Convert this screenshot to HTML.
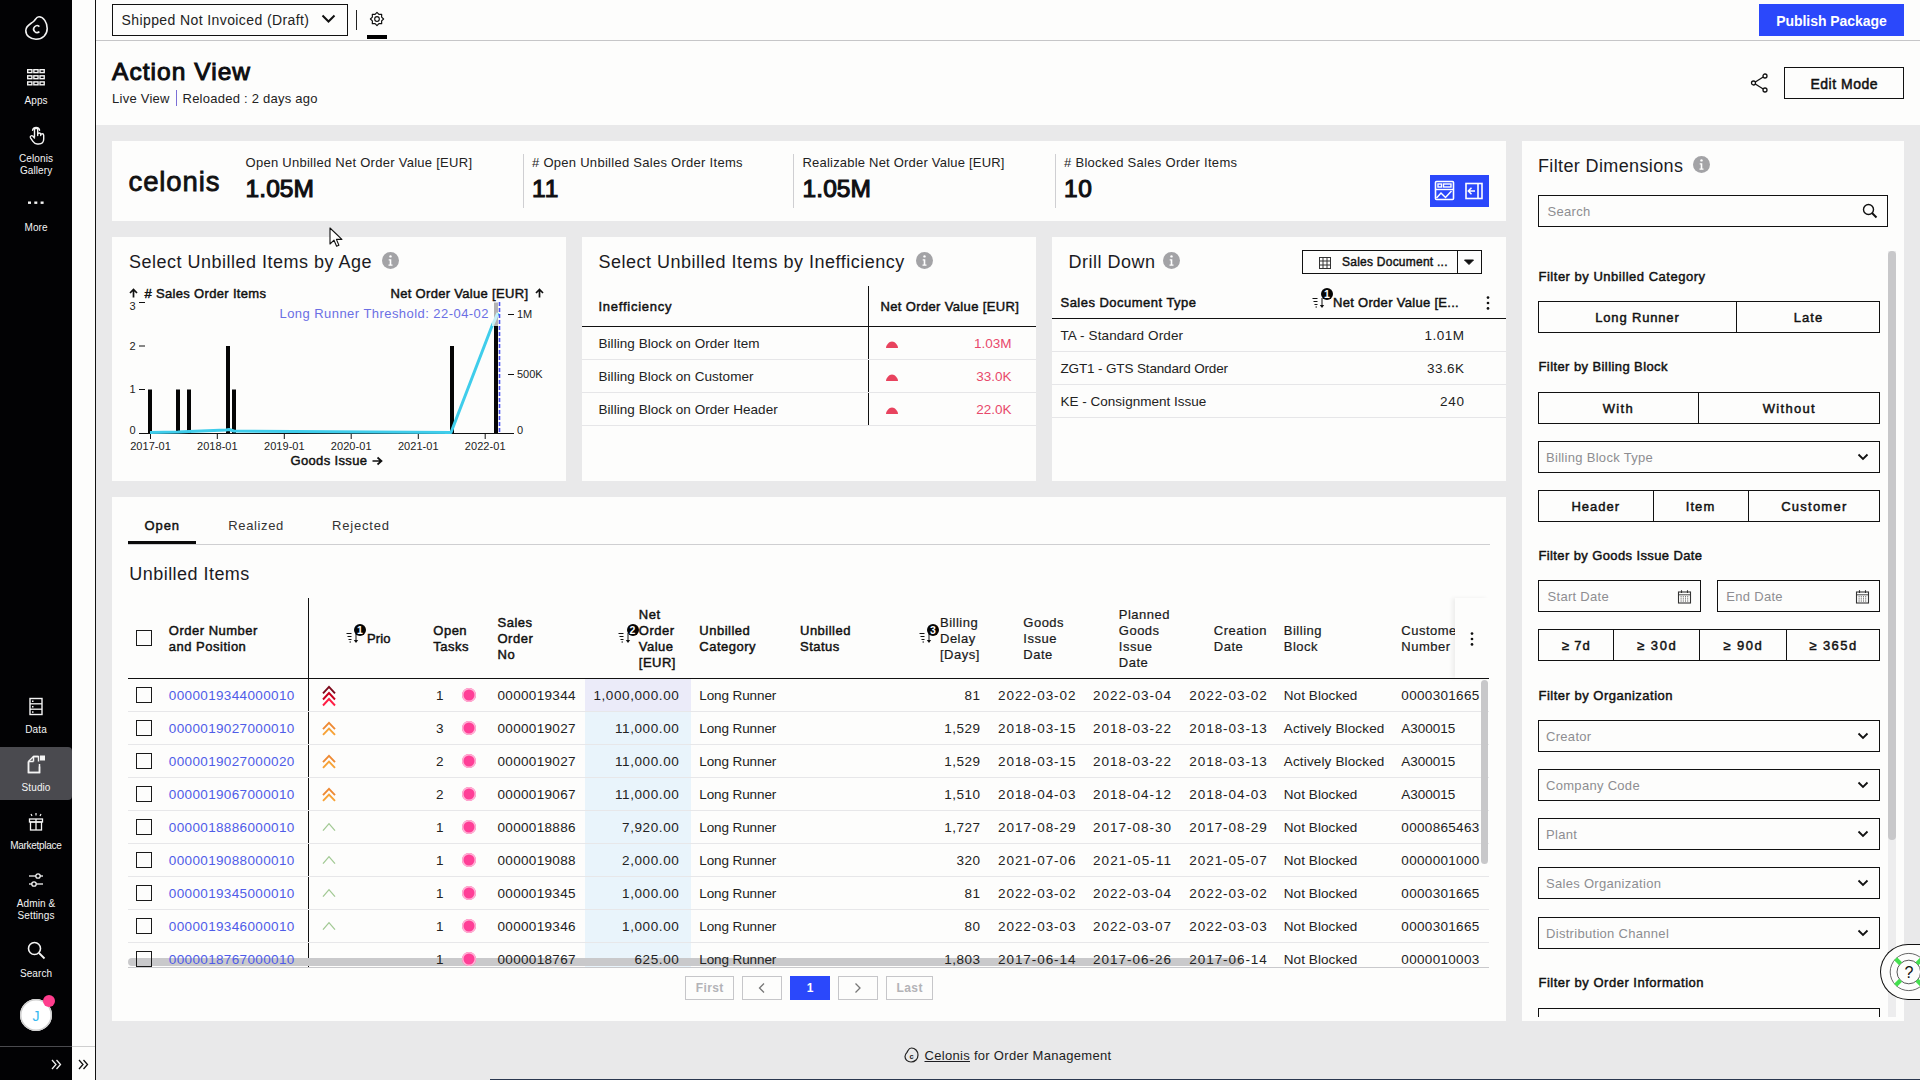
<!DOCTYPE html>
<html><head><meta charset="utf-8"><title>Action View</title>
<style>
html,body{margin:0;padding:0;width:1920px;height:1080px;overflow:hidden;background:#fdfdfc}
body{position:relative;font-family:"Liberation Sans",sans-serif}
.r{position:absolute}
.t{position:absolute;white-space:pre;font-family:"Liberation Sans",sans-serif}
</style></head><body>
<div class="r" style="left:96px;top:0px;width:1824px;height:1080px;background:#fdfdfc"></div>
<div class="r" style="left:96px;top:125px;width:1824px;height:955px;background:#e9e9ea"></div>
<div class="r" style="left:96px;top:40px;width:1824px;height:1px;background:#c6c6c8"></div>
<div class="r" style="left:0px;top:0px;width:72px;height:1080px;background:#020204"></div>
<div class="r" style="left:72px;top:0px;width:23px;height:1080px;background:#fdfdfc"></div>
<div class="r" style="left:95px;top:0px;width:1px;height:1080px;background:#111"></div>
<div class="r" style="left:0px;top:1046px;width:72px;height:1px;background:#4a4a4e"></div>
<div class="r" style="left:72px;top:1046px;width:23px;height:1px;background:#cfcfcf"></div>
<div class="r" style="left:490px;top:1079px;width:1430px;height:1px;background:#2a3850"></div>
<div class="r" style="left:112px;top:141px;width:1394px;height:80px;background:#fdfdfc"></div>
<div class="r" style="left:1522px;top:141px;width:382px;height:880px;background:#fdfdfc"></div>
<div class="r" style="left:112px;top:237px;width:454px;height:244px;background:#fdfdfc"></div>
<div class="r" style="left:582px;top:237px;width:454px;height:244px;background:#fdfdfc"></div>
<div class="r" style="left:1052px;top:237px;width:454px;height:244px;background:#fdfdfc"></div>
<div class="r" style="left:112px;top:497px;width:1394px;height:524px;background:#fdfdfc"></div>
<svg class="r" style="left:20px;top:12px;" width="32" height="32" viewBox="0 0 32 32"><path d="M19 4.8C23.5 4.8 27.2 10.5 27.2 16.5 27.2 22.8 22.5 27.2 16 27.2 10 27.2 5.8 23.5 5.8 18.5 5.8 13.5 10.5 12 13.5 9.5 15.5 7.8 16.2 4.8 19 4.8Z" fill="none" stroke="#f2f2f2" stroke-width="1.6"/><path d="M19.4 14.6A3.4 3.4 0 1 0 19.4 19.6" fill="none" stroke="#f2f2f2" stroke-width="1.6"/></svg>
<svg class="r" style="left:27px;top:68.8px;" width="20" height="18" viewBox="0 0 20 18"><rect x="0.70" y="0.70" width="4.2" height="2.9" fill="none" stroke="#f4f4f4" stroke-width="1.4"/><rect x="6.85" y="0.70" width="4.2" height="2.9" fill="none" stroke="#f4f4f4" stroke-width="1.4"/><rect x="13.00" y="0.70" width="4.2" height="2.9" fill="none" stroke="#f4f4f4" stroke-width="1.4"/><rect x="0.70" y="6.80" width="4.2" height="2.9" fill="none" stroke="#f4f4f4" stroke-width="1.4"/><rect x="6.85" y="6.80" width="4.2" height="2.9" fill="none" stroke="#f4f4f4" stroke-width="1.4"/><rect x="13.00" y="6.80" width="4.2" height="2.9" fill="none" stroke="#f4f4f4" stroke-width="1.4"/><rect x="0.70" y="12.90" width="4.2" height="2.9" fill="none" stroke="#f4f4f4" stroke-width="1.4"/><rect x="6.85" y="12.90" width="4.2" height="2.9" fill="none" stroke="#f4f4f4" stroke-width="1.4"/><rect x="13.00" y="12.90" width="4.2" height="2.9" fill="none" stroke="#f4f4f4" stroke-width="1.4"/></svg>
<div class="t" style="top:96.00px;font-size:10px;line-height:10px;font-weight:400;color:#f4f4f4;letter-spacing:0.100px;left:-263.95px;width:600px;text-align:center;">Apps</div>
<svg class="r" style="left:27px;top:125px;" width="20" height="20" viewBox="0 0 20 20"><path d="M7.5 12V5a1.6 1.6 0 0 1 3.2 0v5.5 M10.7 9.5a1.5 1.5 0 0 1 3 0v1 M13.7 10.2a1.5 1.5 0 0 1 3 0v3.8c0 3-2 5-5 5h-1.5c-2 0-3.2-1-4.3-2.6L3.5 12.8a1.4 1.4 0 0 1 2.2-1.7L7.5 13 M5.6 5.2a3.6 3.6 0 0 1 7 0" fill="none" stroke="#f4f4f4" stroke-width="1.4" stroke-linecap="round" stroke-linejoin="round"/></svg>
<div class="t" style="top:154.00px;font-size:10px;line-height:10px;font-weight:400;color:#f4f4f4;letter-spacing:0.100px;left:-263.95px;width:600px;text-align:center;">Celonis</div>
<div class="t" style="top:166.00px;font-size:10px;line-height:10px;font-weight:400;color:#f4f4f4;letter-spacing:0.100px;left:-263.95px;width:600px;text-align:center;">Gallery</div>
<svg class="r" style="left:26px;top:200px;" width="20" height="6" viewBox="0 0 20 6"><rect x="2.0" y="1.5" width="3" height="2.4" fill="#f4f4f4"/><rect x="8.3" y="1.5" width="3" height="2.4" fill="#f4f4f4"/><rect x="14.6" y="1.5" width="3" height="2.4" fill="#f4f4f4"/></svg>
<div class="t" style="top:222.50px;font-size:10px;line-height:10px;font-weight:400;color:#f4f4f4;letter-spacing:0.100px;left:-263.95px;width:600px;text-align:center;">More</div>
<svg class="r" style="left:27px;top:696px;" width="18" height="21" viewBox="0 0 18 21"><rect x="3" y="2.5" width="12" height="16" fill="none" stroke="#f4f4f4" stroke-width="1.4"/><line x1="3" y1="7.8" x2="15" y2="7.8" stroke="#f4f4f4" stroke-width="1.3"/><line x1="3" y1="13.2" x2="15" y2="13.2" stroke="#f4f4f4" stroke-width="1.3"/><rect x="5" y="4.5" width="1.5" height="1.5" fill="#f4f4f4"/><rect x="5" y="10" width="1.5" height="1.5" fill="#f4f4f4"/><rect x="5" y="15.3" width="1.5" height="1.5" fill="#f4f4f4"/></svg>
<div class="t" style="top:725.00px;font-size:10px;line-height:10px;font-weight:400;color:#f4f4f4;letter-spacing:0.100px;left:-263.95px;width:600px;text-align:center;">Data</div>
<div class="r" style="left:0px;top:747px;width:72px;height:53px;background:#4a4a4f;border-radius:0 4px 4px 0"></div>
<svg class="r" style="left:25px;top:753px;" width="22" height="22" viewBox="0 0 22 22"><path d="M3.5 8.5h5l0 0v-0 M3.5 8.5v11h11v-6 M3.5 8.5l5-0 M8.5 8.5v-5 M8.5 3.5l4.5 0 M14.5 13.5l0 0" fill="none" stroke="#f4f4f4" stroke-width="1.5"/><path d="M3.5 8.5L8.5 3.5h5v5" fill="none" stroke="#f4f4f4" stroke-width="1.4"/><rect x="15" y="2.5" width="5" height="5" fill="#f4f4f4"/><path d="M14.5 11v8.5h-11v-11" fill="none" stroke="#f4f4f4" stroke-width="1.5"/></svg>
<div class="t" style="top:782.50px;font-size:10px;line-height:10px;font-weight:400;color:#f4f4f4;letter-spacing:0.100px;left:-263.95px;width:600px;text-align:center;">Studio</div>
<svg class="r" style="left:26px;top:811px;" width="20" height="21" viewBox="0 0 20 21"><rect x="3.5" y="8" width="13" height="3" fill="none" stroke="#f4f4f4" stroke-width="1.3"/><rect x="4.5" y="11" width="11" height="8" fill="none" stroke="#f4f4f4" stroke-width="1.3"/><line x1="10" y1="8" x2="10" y2="19" stroke="#f4f4f4" stroke-width="1.3"/><path d="M5 3l1 2M10 2v2.5M15 3l-1 2" stroke="#f4f4f4" stroke-width="1.2"/></svg>
<div class="t" style="top:840.50px;font-size:10px;line-height:10px;font-weight:400;color:#f4f4f4;letter-spacing:-0.297px;left:-264.15px;width:600px;text-align:center;">Marketplace</div>
<svg class="r" style="left:26px;top:870px;" width="20" height="20" viewBox="0 0 20 20"><line x1="3" y1="6" x2="17" y2="6" stroke="#f4f4f4" stroke-width="1.3"/><circle cx="12" cy="6" r="2.2" fill="#020204" stroke="#f4f4f4" stroke-width="1.3"/><line x1="3" y1="14" x2="17" y2="14" stroke="#f4f4f4" stroke-width="1.3"/><circle cx="8" cy="14" r="2.2" fill="#020204" stroke="#f4f4f4" stroke-width="1.3"/></svg>
<div class="t" style="top:898.50px;font-size:10px;line-height:10px;font-weight:400;color:#f4f4f4;letter-spacing:0.100px;left:-263.95px;width:600px;text-align:center;">Admin &amp;</div>
<div class="t" style="top:910.50px;font-size:10px;line-height:10px;font-weight:400;color:#f4f4f4;letter-spacing:0.100px;left:-263.95px;width:600px;text-align:center;">Settings</div>
<svg class="r" style="left:26px;top:940px;" width="20" height="20" viewBox="0 0 20 20"><circle cx="8.5" cy="8.5" r="6" fill="none" stroke="#f4f4f4" stroke-width="1.6"/><line x1="13" y1="13" x2="18.5" y2="18.5" stroke="#f4f4f4" stroke-width="1.8"/></svg>
<div class="t" style="top:968.50px;font-size:10px;line-height:10px;font-weight:400;color:#f4f4f4;letter-spacing:0.100px;left:-263.95px;width:600px;text-align:center;">Search</div>
<div class="r" style="left:20px;top:999px;width:32px;height:32px;border-radius:50%;background:#fff;box-shadow:0 0 0 1.5px #cfcfcf inset"></div>
<div class="t" style="top:1009.10px;font-size:14px;line-height:14px;font-weight:400;color:#35b8f0;letter-spacing:0.000px;left:-264.00px;width:600px;text-align:center;">J</div>
<div class="r" style="left:43px;top:995px;width:12px;height:12px;border-radius:50%;background:#ff3d8d"></div>
<svg class="r" style="left:51px;top:1059px;" width="11" height="11" viewBox="0 0 11 11"><path d="M1 1l4 4.5-4 4.5M5.5 1l4 4.5-4 4.5" fill="none" stroke="#f0f0f0" stroke-width="1.3"/></svg>
<svg class="r" style="left:78px;top:1059px;" width="11" height="11" viewBox="0 0 11 11"><path d="M1 1l4 4.5-4 4.5M5.5 1l4 4.5-4 4.5" fill="none" stroke="#111" stroke-width="1.3"/></svg>
<div class="r" style="left:112px;top:4px;width:236px;height:32px;border:1px solid #111;box-sizing:border-box"></div>
<div class="t" style="top:13.10px;font-size:14px;line-height:14px;font-weight:400;color:#222;letter-spacing:0.402px;left:121.5px;">Shipped Not Invoiced (Draft)</div>
<svg class="r" style="left:320px;top:12px;" width="17" height="12" viewBox="0 0 17 12"><path d="M2.5 3.5l6 6 6-6" fill="none" stroke="#111" stroke-width="2"/></svg>
<div class="r" style="left:356px;top:10px;width:1px;height:20px;background:#222"></div>
<svg class="r" style="left:367px;top:9px;" width="20" height="20" viewBox="0 0 20 20"><g transform="translate(10 10)"><polygon points="6.60,0.00 4.62,1.91 4.67,4.67 1.91,4.62 0.00,6.60 -1.91,4.62 -4.67,4.67 -4.62,1.91 -6.60,0.00 -4.62,-1.91 -4.67,-4.67 -1.91,-4.62 -0.00,-6.60 1.91,-4.62 4.67,-4.67 4.62,-1.91" fill="none" stroke="#111" stroke-width="1.2" stroke-linejoin="round"/><circle r="2.3" fill="none" stroke="#111" stroke-width="1.2"/></g></svg>
<div class="r" style="left:367px;top:35px;width:20px;height:4px;background:#000"></div>
<div class="r" style="left:1759px;top:4px;width:145px;height:32px;background:#2b48fb"></div>
<div class="t" style="top:13.60px;font-size:14px;line-height:14px;font-weight:700;color:#fff;letter-spacing:-0.050px;left:1531.47px;width:600px;text-align:center;">Publish Package</div>
<div class="t" style="top:60.17px;font-size:24.5px;line-height:24.5px;font-weight:400;color:#0d0d10;letter-spacing:1.044px;left:112px;-webkit-text-stroke:1px #0d0d10">Action View</div>
<div class="t" style="top:91.95px;font-size:13px;line-height:13px;font-weight:400;color:#222;letter-spacing:0.262px;left:112px;">Live View</div>
<div class="r" style="left:176px;top:90px;width:1px;height:16px;background:#7b6fd6"></div>
<div class="t" style="top:91.95px;font-size:13px;line-height:13px;font-weight:400;color:#222;letter-spacing:0.245px;left:182.5px;">Reloaded : 2 days ago</div>
<svg class="r" style="left:1749px;top:72px;" width="22" height="22" viewBox="0 0 22 22"><circle cx="16" cy="4" r="2" fill="none" stroke="#111" stroke-width="1.3"/><circle cx="4.5" cy="11" r="2" fill="none" stroke="#111" stroke-width="1.3"/><circle cx="16" cy="18" r="2" fill="none" stroke="#111" stroke-width="1.3"/><line x1="6.3" y1="10" x2="14.2" y2="5" stroke="#111" stroke-width="1.3"/><line x1="6.3" y1="12" x2="14.2" y2="17" stroke="#111" stroke-width="1.3"/></svg>
<div class="r" style="left:1784px;top:67px;width:120px;height:32px;border:1px solid #111;box-sizing:border-box"></div>
<div class="t" style="top:76.60px;font-size:14px;line-height:14px;font-weight:400;color:#111;letter-spacing:0.495px;left:1544.25px;width:600px;text-align:center;-webkit-text-stroke:0.49px #111;">Edit Mode</div>
<svg class="r" style="left:902px;top:1046px;" width="18" height="18" viewBox="0 0 18 18"><path d="M9.5 2c3.5 0 6.5 3 6.5 7s-3 7-7 7C5.5 16 3 13.5 3 10.5 3 8.5 4 7.5 5 6.3 6.3 4.5 6.5 2 9.5 2z" fill="none" stroke="#222" stroke-width="1.2"/><text x="9.5" y="12.5" text-anchor="middle" font-family="Liberation Sans" font-weight="700" font-size="7.5" fill="#222">c</text></svg>
<div class="t" style="top:1048.95px;font-size:13px;line-height:13px;font-weight:400;color:#1d1d22;letter-spacing:0.300px;left:924.5px;"><span style="text-decoration:underline">Celonis</span> for Order Management</div>
<div class="t" style="top:167.62px;font-size:27.5px;line-height:27.5px;font-weight:400;color:#111;letter-spacing:0.899px;left:128.5px;-webkit-text-stroke:0.8px #111">celonis</div>
<div class="t" style="top:155.95px;font-size:13px;line-height:13px;font-weight:400;color:#222;letter-spacing:0.272px;left:245.5px;">Open Unbilled Net Order Value [EUR]</div>
<div class="t" style="top:177.18px;font-size:24.5px;line-height:24.5px;font-weight:400;color:#0f0f12;letter-spacing:0.101px;left:245.5px;-webkit-text-stroke:1.1px #0f0f12">1.05M</div>
<div class="t" style="top:155.95px;font-size:13px;line-height:13px;font-weight:400;color:#222;letter-spacing:0.278px;left:532px;"># Open Unbilled Sales Order Items</div>
<div class="t" style="top:177.18px;font-size:24.5px;line-height:24.5px;font-weight:400;color:#0f0f12;letter-spacing:1.066px;left:532px;-webkit-text-stroke:1.1px #0f0f12">11</div>
<div class="t" style="top:155.95px;font-size:13px;line-height:13px;font-weight:400;color:#222;letter-spacing:0.207px;left:802.5px;">Realizable Net Order Value [EUR]</div>
<div class="t" style="top:177.18px;font-size:24.5px;line-height:24.5px;font-weight:400;color:#0f0f12;letter-spacing:0.101px;left:802.5px;-webkit-text-stroke:1.1px #0f0f12">1.05M</div>
<div class="t" style="top:155.95px;font-size:13px;line-height:13px;font-weight:400;color:#222;letter-spacing:0.290px;left:1064px;"># Blocked Sales Order Items</div>
<div class="t" style="top:177.18px;font-size:24.5px;line-height:24.5px;font-weight:400;color:#0f0f12;letter-spacing:0.748px;left:1064px;-webkit-text-stroke:1.1px #0f0f12">10</div>
<div class="r" style="left:523px;top:154px;width:1px;height:54px;background:#cfcfd2"></div>
<div class="r" style="left:793px;top:154px;width:1px;height:54px;background:#cfcfd2"></div>
<div class="r" style="left:1055px;top:154px;width:1px;height:54px;background:#cfcfd2"></div>
<div class="r" style="left:1430px;top:175px;width:59px;height:32px;background:#2b48fb"></div>
<svg class="r" style="left:1430px;top:175px;" width="59" height="32" viewBox="0 0 59 32"><rect x="5.5" y="6.5" width="18" height="18" rx="1" fill="none" stroke="#fff" stroke-width="1.6"/><rect x="8" y="9" width="3.5" height="3" fill="none" stroke="#fff" stroke-width="1.4"/><rect x="13.5" y="9" width="7.5" height="3" fill="none" stroke="#fff" stroke-width="1.4"/><line x1="5.5" y1="14.5" x2="23.5" y2="14.5" stroke="#fff" stroke-width="1.4"/><path d="M6.5 23l4.5-5 4.5 4.5 6-6.5" fill="none" stroke="#fff" stroke-width="1.5"/><rect x="36" y="8.5" width="16" height="15" fill="none" stroke="#fff" stroke-width="1.6"/><line x1="48" y1="8.5" x2="48" y2="23.5" stroke="#fff" stroke-width="1.6"/><path d="M45 16h-6.5M41.5 12.8l-3.2 3.2 3.2 3.2" fill="none" stroke="#fff" stroke-width="1.5"/></svg>
<svg class="r" style="left:329px;top:227px;" width="14" height="22" viewBox="0 0 14 22"><path d="M1 1v16l4-3.8 2.6 6 2.3-1-2.5-5.8h5.5z" fill="#fff" stroke="#111" stroke-width="1.1" stroke-linejoin="round"/></svg>
<div class="t" style="top:252.70px;font-size:18px;line-height:18px;font-weight:400;color:#1b1b1f;letter-spacing:0.500px;left:129px;">Select Unbilled Items by Age</div>
<svg class="r" style="left:381.5px;top:252.0px;" width="17" height="17" viewBox="0 0 17 17"><circle cx="8.5" cy="8.5" r="8.5" fill="#a3a3a6"/><circle cx="8.5" cy="4.42" r="1.2" fill="#fff"/><path d="M6.70 7.30h2.6v5.2h1.2v1.3h-4v-1.3h1.2v-3.9h-1z" fill="#fff"/></svg>
<svg class="r" style="left:129px;top:288px;" width="9" height="11" viewBox="0 0 9 11"><path d="M4.5 9.5V1.5M1 5l3.5-3.5L8 5" fill="none" stroke="#111" stroke-width="1.7"/></svg>
<div class="t" style="top:286.95px;font-size:13px;line-height:13px;font-weight:400;color:#111;letter-spacing:0.328px;left:144.5px;-webkit-text-stroke:0.46px #111;"># Sales Order Items</div>
<div class="t" style="top:286.55px;font-size:13px;line-height:13px;font-weight:400;color:#111;letter-spacing:0.312px;left:390.5px;-webkit-text-stroke:0.46px #111;">Net Order Value [EUR]</div>
<svg class="r" style="left:535px;top:288px;" width="9" height="11" viewBox="0 0 9 11"><path d="M4.5 9.5V1.5M1 5l3.5-3.5L8 5" fill="none" stroke="#111" stroke-width="1.7"/></svg>
<svg class="r" style="left:0;top:0" width="600" height="480"><rect x="148" y="389.5" width="4" height="43.5" fill="#050505"/><rect x="176" y="389.5" width="4" height="43.5" fill="#050505"/><rect x="187" y="389.5" width="4" height="43.5" fill="#050505"/><rect x="226" y="346.0" width="4" height="87.0" fill="#050505"/><rect x="232" y="389.5" width="4" height="43.5" fill="#050505"/><rect x="450" y="346.0" width="4" height="87.0" fill="#050505"/><rect x="494" y="302.5" width="4" height="130.5" fill="#050505"/><line x1="139" y1="433.5" x2="514" y2="433.5" stroke="#111" stroke-width="1"/><line x1="139" y1="389.5" x2="145" y2="389.5" stroke="#111" stroke-width="1"/><line x1="139" y1="346.0" x2="145" y2="346.0" stroke="#111" stroke-width="1"/><line x1="139" y1="302.5" x2="145" y2="302.5" stroke="#111" stroke-width="1"/><line x1="150.5" y1="433" x2="150.5" y2="439" stroke="#111" stroke-width="1"/><line x1="217.3" y1="433" x2="217.3" y2="439" stroke="#111" stroke-width="1"/><line x1="284.3" y1="433" x2="284.3" y2="439" stroke="#111" stroke-width="1"/><line x1="351.2" y1="433" x2="351.2" y2="439" stroke="#111" stroke-width="1"/><line x1="418.3" y1="433" x2="418.3" y2="439" stroke="#111" stroke-width="1"/><line x1="485.2" y1="433" x2="485.2" y2="439" stroke="#111" stroke-width="1"/><line x1="508" y1="314.5" x2="514" y2="314.5" stroke="#111" stroke-width="1"/><line x1="508" y1="374.5" x2="514" y2="374.5" stroke="#111" stroke-width="1"/><polyline points="150,432.5 178,432 189,431.5 226,430 229,429.5 234,431 451,432.5 492,326 498,313" fill="none" stroke="#3fcdeb" stroke-width="3" stroke-linejoin="round"/><rect x="492" y="302" width="6" height="24" fill="#fdfdfc" fill-opacity="0.7"/><line x1="499.5" y1="302" x2="499.5" y2="433" stroke="#4a50f0" stroke-width="1.6" stroke-dasharray="4 2"/></svg>
<div class="t" style="top:306.95px;font-size:13px;line-height:13px;font-weight:400;color:#6b6fe4;letter-spacing:0.446px;left:279.5px;">Long Runner Threshold: 22-04-02</div>
<div class="t" style="top:301.15px;font-size:11px;line-height:11px;font-weight:400;color:#222;letter-spacing:0.000px;right:1784.50px;">3</div>
<div class="t" style="top:341.15px;font-size:11px;line-height:11px;font-weight:400;color:#222;letter-spacing:0.000px;right:1784.50px;">2</div>
<div class="t" style="top:384.15px;font-size:11px;line-height:11px;font-weight:400;color:#222;letter-spacing:0.000px;right:1784.50px;">1</div>
<div class="t" style="top:425.15px;font-size:11px;line-height:11px;font-weight:400;color:#222;letter-spacing:0.000px;right:1784.50px;">0</div>
<div class="t" style="top:309.15px;font-size:11px;line-height:11px;font-weight:400;color:#222;letter-spacing:0.000px;left:517px;">1M</div>
<div class="t" style="top:369.15px;font-size:11px;line-height:11px;font-weight:400;color:#222;letter-spacing:0.000px;left:517px;">500K</div>
<div class="t" style="top:425.15px;font-size:11px;line-height:11px;font-weight:400;color:#222;letter-spacing:0.000px;left:517px;">0</div>
<div class="t" style="top:441.45px;font-size:11px;line-height:11px;font-weight:400;color:#222;letter-spacing:0.050px;left:-149.47px;width:600px;text-align:center;">2017-01</div>
<div class="t" style="top:441.45px;font-size:11px;line-height:11px;font-weight:400;color:#222;letter-spacing:0.050px;left:-82.67px;width:600px;text-align:center;">2018-01</div>
<div class="t" style="top:441.45px;font-size:11px;line-height:11px;font-weight:400;color:#222;letter-spacing:0.050px;left:-15.67px;width:600px;text-align:center;">2019-01</div>
<div class="t" style="top:441.45px;font-size:11px;line-height:11px;font-weight:400;color:#222;letter-spacing:0.050px;left:51.22px;width:600px;text-align:center;">2020-01</div>
<div class="t" style="top:441.45px;font-size:11px;line-height:11px;font-weight:400;color:#222;letter-spacing:0.050px;left:118.33px;width:600px;text-align:center;">2021-01</div>
<div class="t" style="top:441.45px;font-size:11px;line-height:11px;font-weight:400;color:#222;letter-spacing:0.050px;left:185.22px;width:600px;text-align:center;">2022-01</div>
<div class="t" style="top:453.95px;font-size:13px;line-height:13px;font-weight:400;color:#111;letter-spacing:0.351px;left:290.5px;-webkit-text-stroke:0.46px #111;">Goods Issue</div>
<svg class="r" style="left:372px;top:456px;" width="11" height="10" viewBox="0 0 11 10"><path d="M0.5 5H9.5M5.5 1.5L9.5 5 5.5 8.5" fill="none" stroke="#111" stroke-width="1.7"/></svg>
<div class="t" style="top:252.70px;font-size:18px;line-height:18px;font-weight:400;color:#1b1b1f;letter-spacing:0.500px;left:598.5px;">Select Unbilled Items by Inefficiency</div>
<svg class="r" style="left:916.0px;top:252.0px;" width="17" height="17" viewBox="0 0 17 17"><circle cx="8.5" cy="8.5" r="8.5" fill="#a3a3a6"/><circle cx="8.5" cy="4.42" r="1.2" fill="#fff"/><path d="M6.70 7.30h2.6v5.2h1.2v1.3h-4v-1.3h1.2v-3.9h-1z" fill="#fff"/></svg>
<div class="r" style="left:868px;top:286px;width:1px;height:140px;background:#111"></div>
<div class="t" style="top:299.95px;font-size:13px;line-height:13px;font-weight:400;color:#111;letter-spacing:0.746px;left:598.5px;-webkit-text-stroke:0.46px #111;">Inefficiency</div>
<div class="t" style="top:299.95px;font-size:13px;line-height:13px;font-weight:400;color:#111;letter-spacing:0.352px;left:880.5px;-webkit-text-stroke:0.46px #111;">Net Order Value [EUR]</div>
<div class="r" style="left:582px;top:326px;width:454px;height:1px;background:#111"></div>
<div class="t" style="top:336.52px;font-size:13.5px;line-height:13.5px;font-weight:400;color:#222;letter-spacing:0.050px;left:598.5px;">Billing Block on Order Item</div>
<div class="t" style="top:336.52px;font-size:13.5px;line-height:13.5px;font-weight:400;color:#e8496b;letter-spacing:0.000px;right:908.50px;">1.03M</div>
<svg class="r" style="left:885px;top:339px;" width="14" height="10" viewBox="0 0 14 10"><path d="M1 9 C1 6 4 2.5 7 2.5 C10 2.5 13 6 13 9z" fill="#e8435e"/></svg>
<div class="r" style="left:582px;top:359px;width:454px;height:1px;background:#e6e6e8"></div>
<div class="t" style="top:369.52px;font-size:13.5px;line-height:13.5px;font-weight:400;color:#222;letter-spacing:0.050px;left:598.5px;">Billing Block on Customer</div>
<div class="t" style="top:369.52px;font-size:13.5px;line-height:13.5px;font-weight:400;color:#e8496b;letter-spacing:0.000px;right:908.50px;">33.0K</div>
<svg class="r" style="left:885px;top:372px;" width="14" height="10" viewBox="0 0 14 10"><path d="M1 9 C1 6 4 2.5 7 2.5 C10 2.5 13 6 13 9z" fill="#e8435e"/></svg>
<div class="r" style="left:582px;top:392px;width:454px;height:1px;background:#e6e6e8"></div>
<div class="t" style="top:402.52px;font-size:13.5px;line-height:13.5px;font-weight:400;color:#222;letter-spacing:0.050px;left:598.5px;">Billing Block on Order Header</div>
<div class="t" style="top:402.52px;font-size:13.5px;line-height:13.5px;font-weight:400;color:#e8496b;letter-spacing:0.000px;right:908.50px;">22.0K</div>
<svg class="r" style="left:885px;top:405px;" width="14" height="10" viewBox="0 0 14 10"><path d="M1 9 C1 6 4 2.5 7 2.5 C10 2.5 13 6 13 9z" fill="#e8435e"/></svg>
<div class="r" style="left:582px;top:425px;width:454px;height:1px;background:#e6e6e8"></div>
<div class="t" style="top:252.70px;font-size:18px;line-height:18px;font-weight:400;color:#1b1b1f;letter-spacing:0.500px;left:1068.5px;">Drill Down</div>
<svg class="r" style="left:1163.0px;top:252.0px;" width="17" height="17" viewBox="0 0 17 17"><circle cx="8.5" cy="8.5" r="8.5" fill="#a3a3a6"/><circle cx="8.5" cy="4.42" r="1.2" fill="#fff"/><path d="M6.70 7.30h2.6v5.2h1.2v1.3h-4v-1.3h1.2v-3.9h-1z" fill="#fff"/></svg>
<div class="r" style="left:1302px;top:250px;width:180px;height:24px;border:1px solid #111;box-sizing:border-box"></div>
<div class="r" style="left:1457px;top:250px;width:1px;height:24px;background:#111"></div>
<svg class="r" style="left:1318px;top:256px;" width="14" height="14" viewBox="0 0 14 14"><rect x="1.5" y="1.5" width="11" height="11" fill="none" stroke="#333" stroke-width="1"/><line x1="1.5" y1="5" x2="12.5" y2="5" stroke="#333"/><line x1="1.5" y1="9" x2="12.5" y2="9" stroke="#333"/><line x1="5" y1="1.5" x2="5" y2="12.5" stroke="#333"/><line x1="9" y1="1.5" x2="9" y2="12.5" stroke="#333"/></svg>
<div class="t" style="top:256.30px;font-size:12px;line-height:12px;font-weight:400;color:#111;letter-spacing:0.242px;left:1342px;-webkit-text-stroke:0.42px #111;">Sales Document ...</div>
<svg class="r" style="left:1463px;top:257px;" width="12" height="10" viewBox="0 0 12 10"><path d="M1.5 3h9l-4.5 4.5z" fill="#111" stroke="#111" stroke-linejoin="round"/></svg>
<div class="t" style="top:296.45px;font-size:13px;line-height:13px;font-weight:400;color:#111;letter-spacing:0.475px;left:1060.5px;-webkit-text-stroke:0.46px #111;">Sales Document Type</div>
<svg class="r" style="left:1312px;top:297px;" width="14" height="12" viewBox="0 0 14 12"><line x1="0.5" y1="1.5" x2="5.5" y2="1.5" stroke="#111" stroke-width="1"/><line x1="1.5" y1="4.5" x2="5.5" y2="4.5" stroke="#111" stroke-width="1"/><line x1="2.5" y1="7.5" x2="5.5" y2="7.5" stroke="#111" stroke-width="1"/><line x1="3.5" y1="10" x2="5" y2="10" stroke="#111" stroke-width="1.2"/><line x1="10" y1="1" x2="10" y2="10" stroke="#111" stroke-width="1"/><path d="M7.8 8l2.2 3 2.2-3z" fill="#111"/></svg>
<div class="r" style="left:1321px;top:288px;width:12px;height:12px;border-radius:50%;background:#050505;color:#fff;font:700 10.5px/12.5px 'Liberation Sans';text-align:center">1</div>
<div class="t" style="top:296.45px;font-size:13px;line-height:13px;font-weight:400;color:#111;letter-spacing:0.300px;left:1333px;-webkit-text-stroke:0.46px #111;">Net Order Value [E...</div>
<svg class="r" style="left:1484.5px;top:294.5px;" width="6" height="16" viewBox="0 0 6 16"><circle cx="3" cy="2.6" r="1.35" fill="#111"/><circle cx="3" cy="8" r="1.35" fill="#111"/><circle cx="3" cy="13.4" r="1.35" fill="#111"/></svg>
<div class="r" style="left:1052px;top:318px;width:454px;height:1px;background:#111"></div>
<div class="t" style="top:328.52px;font-size:13.5px;line-height:13.5px;font-weight:400;color:#222;letter-spacing:0.108px;left:1060.5px;">TA - Standard Order</div>
<div class="t" style="top:328.52px;font-size:13.5px;line-height:13.5px;font-weight:400;color:#222;letter-spacing:0.470px;right:455.53px;">1.01M</div>
<div class="r" style="left:1052px;top:351px;width:454px;height:1px;background:#e6e6e8"></div>
<div class="t" style="top:361.52px;font-size:13.5px;line-height:13.5px;font-weight:400;color:#222;letter-spacing:-0.144px;left:1060.5px;">ZGT1 - GTS Standard Order</div>
<div class="t" style="top:361.52px;font-size:13.5px;line-height:13.5px;font-weight:400;color:#222;letter-spacing:0.430px;right:455.57px;">33.6K</div>
<div class="r" style="left:1052px;top:384px;width:454px;height:1px;background:#e6e6e8"></div>
<div class="t" style="top:394.52px;font-size:13.5px;line-height:13.5px;font-weight:400;color:#222;letter-spacing:0.011px;left:1060.5px;">KE - Consignment Issue</div>
<div class="t" style="top:394.52px;font-size:13.5px;line-height:13.5px;font-weight:400;color:#222;letter-spacing:0.688px;right:455.31px;">240</div>
<div class="r" style="left:1052px;top:417px;width:454px;height:1px;background:#e6e6e8"></div>
<div class="t" style="top:157.20px;font-size:18px;line-height:18px;font-weight:400;color:#1b1b1f;letter-spacing:0.373px;left:1538px;">Filter Dimensions</div>
<svg class="r" style="left:1692.5px;top:156.0px;" width="17" height="17" viewBox="0 0 17 17"><circle cx="8.5" cy="8.5" r="8.5" fill="#a3a3a6"/><circle cx="8.5" cy="4.42" r="1.2" fill="#fff"/><path d="M6.70 7.30h2.6v5.2h1.2v1.3h-4v-1.3h1.2v-3.9h-1z" fill="#fff"/></svg>
<div class="r" style="left:1538px;top:195px;width:350px;height:32px;border:1px solid #111;box-sizing:border-box"></div>
<div class="t" style="top:205.25px;font-size:13px;line-height:13px;font-weight:400;color:#8d8d91;letter-spacing:0.300px;left:1547.5px;">Search</div>
<svg class="r" style="left:1861px;top:202px;" width="18" height="18" viewBox="0 0 18 18"><circle cx="7.5" cy="7.5" r="5" fill="none" stroke="#111" stroke-width="1.4"/><line x1="11" y1="11" x2="15.5" y2="15.5" stroke="#111" stroke-width="2"/></svg>
<div class="r" style="left:1888px;top:251px;width:8px;height:766px;background:#ededee"></div>
<div class="r" style="left:1888px;top:251px;width:8px;height:589px;background:#c8c8ca;border-radius:4px"></div>
<div class="t" style="top:270.25px;font-size:13px;line-height:13px;font-weight:400;color:#111;letter-spacing:0.512px;left:1538.5px;-webkit-text-stroke:0.46px #111;">Filter by Unbilled Category</div>
<div class="r" style="left:1538px;top:301px;width:342px;height:32px;border:1px solid #111;box-sizing:border-box"></div>
<div class="r" style="left:1736px;top:301px;width:1px;height:32px;background:#111"></div>
<div class="t" style="top:311.25px;font-size:13px;line-height:13px;font-weight:400;color:#111;letter-spacing:0.833px;left:1337.42px;width:600px;text-align:center;-webkit-text-stroke:0.46px #111;">Long Runner</div>
<div class="t" style="top:311.25px;font-size:13px;line-height:13px;font-weight:400;color:#111;letter-spacing:0.999px;left:1508.50px;width:600px;text-align:center;-webkit-text-stroke:0.46px #111;">Late</div>
<div class="t" style="top:360.25px;font-size:13px;line-height:13px;font-weight:400;color:#111;letter-spacing:0.412px;left:1538.5px;-webkit-text-stroke:0.46px #111;">Filter by Billing Block</div>
<div class="r" style="left:1538px;top:392px;width:342px;height:32px;border:1px solid #111;box-sizing:border-box"></div>
<div class="r" style="left:1697.5px;top:392px;width:1px;height:32px;background:#111"></div>
<div class="t" style="top:402.45px;font-size:13px;line-height:13px;font-weight:400;color:#111;letter-spacing:1.333px;left:1318.42px;width:600px;text-align:center;-webkit-text-stroke:0.46px #111;">With</div>
<div class="t" style="top:402.45px;font-size:13px;line-height:13px;font-weight:400;color:#111;letter-spacing:1.321px;left:1489.41px;width:600px;text-align:center;-webkit-text-stroke:0.46px #111;">Without</div>
<div class="r" style="left:1538px;top:441px;width:342px;height:32px;border:1px solid #111;box-sizing:border-box"></div>
<div class="t" style="top:451.45px;font-size:13px;line-height:13px;font-weight:400;color:#8d8d91;letter-spacing:0.300px;left:1546px;">Billing Block Type</div>
<svg class="r" style="left:1855.5px;top:452px;" width="14" height="10" viewBox="0 0 14 10"><path d="M2.5 2.5l4.5 4.5 4.5-4.5" fill="none" stroke="#111" stroke-width="1.8"/></svg>
<div class="r" style="left:1538px;top:490px;width:342px;height:32px;border:1px solid #111;box-sizing:border-box"></div>
<div class="r" style="left:1652.5px;top:490px;width:1px;height:32px;background:#111"></div>
<div class="r" style="left:1747.5px;top:490px;width:1px;height:32px;background:#111"></div>
<div class="t" style="top:500.25px;font-size:13px;line-height:13px;font-weight:400;color:#111;letter-spacing:0.972px;left:1295.74px;width:600px;text-align:center;-webkit-text-stroke:0.46px #111;">Header</div>
<div class="t" style="top:500.25px;font-size:13px;line-height:13px;font-weight:400;color:#111;letter-spacing:1.072px;left:1400.54px;width:600px;text-align:center;-webkit-text-stroke:0.46px #111;">Item</div>
<div class="t" style="top:500.25px;font-size:13px;line-height:13px;font-weight:400;color:#111;letter-spacing:1.236px;left:1514.37px;width:600px;text-align:center;-webkit-text-stroke:0.46px #111;">Customer</div>
<div class="t" style="top:548.95px;font-size:13px;line-height:13px;font-weight:400;color:#111;letter-spacing:0.384px;left:1538.5px;-webkit-text-stroke:0.46px #111;">Filter by Goods Issue Date</div>
<div class="r" style="left:1538px;top:580px;width:163px;height:32px;border:1px solid #111;box-sizing:border-box"></div>
<div class="r" style="left:1717px;top:580px;width:163px;height:32px;border:1px solid #111;box-sizing:border-box"></div>
<div class="t" style="top:590.25px;font-size:13px;line-height:13px;font-weight:400;color:#8d8d91;letter-spacing:0.300px;left:1547.5px;">Start Date</div>
<div class="t" style="top:590.25px;font-size:13px;line-height:13px;font-weight:400;color:#8d8d91;letter-spacing:0.300px;left:1726.3px;">End Date</div>
<svg class="r" style="left:1676.5px;top:589px;" width="15" height="16" viewBox="0 0 15 16"><rect x="1.5" y="3" width="12" height="11" fill="none" stroke="#333" stroke-width="1.1"/><line x1="4.5" y1="1.2" x2="4.5" y2="4" stroke="#333" stroke-width="1.1"/><line x1="10.5" y1="1.2" x2="10.5" y2="4" stroke="#333" stroke-width="1.1"/><line x1="1.5" y1="5.8" x2="13.5" y2="5.8" stroke="#333" stroke-width="0.9"/><rect x="3.6" y="7.3" width="1" height="1" fill="#444"/><rect x="5.8" y="7.3" width="1" height="1" fill="#444"/><rect x="8.0" y="7.3" width="1" height="1" fill="#444"/><rect x="10.2" y="7.3" width="1" height="1" fill="#444"/><rect x="3.6" y="9.4" width="1" height="1" fill="#444"/><rect x="5.8" y="9.4" width="1" height="1" fill="#444"/><rect x="8.0" y="9.4" width="1" height="1" fill="#444"/><rect x="10.2" y="9.4" width="1" height="1" fill="#444"/><rect x="3.6" y="11.5" width="1" height="1" fill="#444"/><rect x="5.8" y="11.5" width="1" height="1" fill="#444"/><rect x="8.0" y="11.5" width="1" height="1" fill="#444"/><rect x="10.2" y="11.5" width="1" height="1" fill="#444"/></svg>
<svg class="r" style="left:1855.0px;top:589px;" width="15" height="16" viewBox="0 0 15 16"><rect x="1.5" y="3" width="12" height="11" fill="none" stroke="#333" stroke-width="1.1"/><line x1="4.5" y1="1.2" x2="4.5" y2="4" stroke="#333" stroke-width="1.1"/><line x1="10.5" y1="1.2" x2="10.5" y2="4" stroke="#333" stroke-width="1.1"/><line x1="1.5" y1="5.8" x2="13.5" y2="5.8" stroke="#333" stroke-width="0.9"/><rect x="3.6" y="7.3" width="1" height="1" fill="#444"/><rect x="5.8" y="7.3" width="1" height="1" fill="#444"/><rect x="8.0" y="7.3" width="1" height="1" fill="#444"/><rect x="10.2" y="7.3" width="1" height="1" fill="#444"/><rect x="3.6" y="9.4" width="1" height="1" fill="#444"/><rect x="5.8" y="9.4" width="1" height="1" fill="#444"/><rect x="8.0" y="9.4" width="1" height="1" fill="#444"/><rect x="10.2" y="9.4" width="1" height="1" fill="#444"/><rect x="3.6" y="11.5" width="1" height="1" fill="#444"/><rect x="5.8" y="11.5" width="1" height="1" fill="#444"/><rect x="8.0" y="11.5" width="1" height="1" fill="#444"/><rect x="10.2" y="11.5" width="1" height="1" fill="#444"/></svg>
<div class="r" style="left:1538px;top:629px;width:342px;height:32px;border:1px solid #111;box-sizing:border-box"></div>
<div class="r" style="left:1613.3px;top:629px;width:1px;height:32px;background:#111"></div>
<div class="r" style="left:1699.3px;top:629px;width:1px;height:32px;background:#111"></div>
<div class="r" style="left:1785.5px;top:629px;width:1px;height:32px;background:#111"></div>
<div class="t" style="top:638.95px;font-size:13px;line-height:13px;font-weight:400;color:#111;letter-spacing:0.931px;left:1276.12px;width:600px;text-align:center;-webkit-text-stroke:0.46px #111;">≥ 7d</div>
<div class="t" style="top:638.95px;font-size:13px;line-height:13px;font-weight:400;color:#111;letter-spacing:1.591px;left:1357.10px;width:600px;text-align:center;-webkit-text-stroke:0.46px #111;">≥ 30d</div>
<div class="t" style="top:638.95px;font-size:13px;line-height:13px;font-weight:400;color:#111;letter-spacing:1.516px;left:1443.16px;width:600px;text-align:center;-webkit-text-stroke:0.46px #111;">≥ 90d</div>
<div class="t" style="top:638.95px;font-size:13px;line-height:13px;font-weight:400;color:#111;letter-spacing:1.427px;left:1533.46px;width:600px;text-align:center;-webkit-text-stroke:0.46px #111;">≥ 365d</div>
<div class="t" style="top:688.95px;font-size:13px;line-height:13px;font-weight:400;color:#111;letter-spacing:0.497px;left:1538.5px;-webkit-text-stroke:0.46px #111;">Filter by Organization</div>
<div class="r" style="left:1538px;top:720px;width:342px;height:32px;border:1px solid #111;box-sizing:border-box"></div>
<div class="t" style="top:730.45px;font-size:13px;line-height:13px;font-weight:400;color:#8d8d91;letter-spacing:0.300px;left:1546px;">Creator</div>
<svg class="r" style="left:1855.5px;top:731px;" width="14" height="10" viewBox="0 0 14 10"><path d="M2.5 2.5l4.5 4.5 4.5-4.5" fill="none" stroke="#111" stroke-width="1.8"/></svg>
<div class="r" style="left:1538px;top:769px;width:342px;height:32px;border:1px solid #111;box-sizing:border-box"></div>
<div class="t" style="top:779.45px;font-size:13px;line-height:13px;font-weight:400;color:#8d8d91;letter-spacing:0.300px;left:1546px;">Company Code</div>
<svg class="r" style="left:1855.5px;top:780px;" width="14" height="10" viewBox="0 0 14 10"><path d="M2.5 2.5l4.5 4.5 4.5-4.5" fill="none" stroke="#111" stroke-width="1.8"/></svg>
<div class="r" style="left:1538px;top:818px;width:342px;height:32px;border:1px solid #111;box-sizing:border-box"></div>
<div class="t" style="top:828.45px;font-size:13px;line-height:13px;font-weight:400;color:#8d8d91;letter-spacing:0.300px;left:1546px;">Plant</div>
<svg class="r" style="left:1855.5px;top:829px;" width="14" height="10" viewBox="0 0 14 10"><path d="M2.5 2.5l4.5 4.5 4.5-4.5" fill="none" stroke="#111" stroke-width="1.8"/></svg>
<div class="r" style="left:1538px;top:867px;width:342px;height:32px;border:1px solid #111;box-sizing:border-box"></div>
<div class="t" style="top:877.45px;font-size:13px;line-height:13px;font-weight:400;color:#8d8d91;letter-spacing:0.300px;left:1546px;">Sales Organization</div>
<svg class="r" style="left:1855.5px;top:878px;" width="14" height="10" viewBox="0 0 14 10"><path d="M2.5 2.5l4.5 4.5 4.5-4.5" fill="none" stroke="#111" stroke-width="1.8"/></svg>
<div class="r" style="left:1538px;top:917px;width:342px;height:32px;border:1px solid #111;box-sizing:border-box"></div>
<div class="t" style="top:927.45px;font-size:13px;line-height:13px;font-weight:400;color:#8d8d91;letter-spacing:0.300px;left:1546px;">Distribution Channel</div>
<svg class="r" style="left:1855.5px;top:928px;" width="14" height="10" viewBox="0 0 14 10"><path d="M2.5 2.5l4.5 4.5 4.5-4.5" fill="none" stroke="#111" stroke-width="1.8"/></svg>
<div class="t" style="top:975.55px;font-size:13px;line-height:13px;font-weight:400;color:#111;letter-spacing:0.511px;left:1538.5px;-webkit-text-stroke:0.46px #111;">Filter by Order Information</div>
<div class="r" style="left:1538px;top:1008px;width:342px;height:9px;border:1px solid #111;border-bottom:none;box-sizing:border-box"></div>
<div class="r" style="left:1880px;top:944px;width:60px;height:56px;border-radius:28px 0 0 28px;background:#fdfdfc;border:1.5px solid #111;border-right:none;box-sizing:border-box"></div>
<svg class="r" style="left:1886px;top:950px;" width="34" height="44" viewBox="0 0 34 44"><circle cx="22.8" cy="22" r="18.6" fill="none" stroke="#555" stroke-width="0.9"/><circle cx="22.8" cy="22" r="11.8" fill="none" stroke="#444" stroke-width="0.9"/><path d="M9.6 8.8l5 5M9.6 35.2l5-5M36 8.8l-5 5M36 35.2l-5-5" stroke="#45e04f" stroke-width="4.2"/><text x="22.9" y="27.5" text-anchor="middle" font-family="Liberation Sans" font-weight="400" font-size="16" fill="#111">?</text></svg>
<div class="t" style="top:518.95px;font-size:13px;line-height:13px;font-weight:400;color:#111;letter-spacing:0.899px;left:144.5px;-webkit-text-stroke:0.46px #111;">Open</div>
<div class="t" style="top:518.95px;font-size:13px;line-height:13px;font-weight:400;color:#333;letter-spacing:0.631px;left:228.3px;">Realized</div>
<div class="t" style="top:518.95px;font-size:13px;line-height:13px;font-weight:400;color:#333;letter-spacing:0.813px;left:332px;">Rejected</div>
<div class="r" style="left:128px;top:544px;width:1362px;height:1px;background:#cfcfd1"></div>
<div class="r" style="left:128px;top:541px;width:68px;height:3px;background:#0a0a0a"></div>
<div class="t" style="top:564.70px;font-size:18px;line-height:18px;font-weight:400;color:#1b1b1f;letter-spacing:0.458px;left:129.3px;">Unbilled Items</div>
<div class="r" style="left:585px;top:679px;width:106px;height:288px;background:#e9f4fb"></div>
<div class="r" style="left:585px;top:679px;width:106px;height:32px;background:#ebebf9"></div>
<div class="r" style="left:136px;top:630px;width:16px;height:16px;border:1.5px solid #1a1a1a;box-sizing:border-box"></div>
<div class="t" style="top:623.95px;font-size:13px;line-height:13px;font-weight:400;color:#111;letter-spacing:0.500px;left:168.8px;-webkit-text-stroke:0.46px #111;">Order Number</div>
<div class="t" style="top:639.95px;font-size:13px;line-height:13px;font-weight:400;color:#111;letter-spacing:0.500px;left:168.8px;-webkit-text-stroke:0.46px #111;">and Position</div>
<div class="r" style="left:308px;top:598px;width:1px;height:369px;background:#111"></div>
<svg class="r" style="left:346px;top:632px;" width="14" height="12" viewBox="0 0 14 12"><line x1="0.5" y1="1.5" x2="5.5" y2="1.5" stroke="#111" stroke-width="1"/><line x1="1.5" y1="4.5" x2="5.5" y2="4.5" stroke="#111" stroke-width="1"/><line x1="2.5" y1="7.5" x2="5.5" y2="7.5" stroke="#111" stroke-width="1"/><line x1="3.5" y1="10" x2="5" y2="10" stroke="#111" stroke-width="1.2"/><line x1="10" y1="1" x2="10" y2="10" stroke="#111" stroke-width="1"/><path d="M7.8 8l2.2 3 2.2-3z" fill="#111"/></svg>
<div class="r" style="left:354px;top:624px;width:12px;height:12px;border-radius:50%;background:#050505;color:#fff;font:700 10.5px/12.5px 'Liberation Sans';text-align:center">1</div>
<div class="t" style="top:631.95px;font-size:13px;line-height:13px;font-weight:400;color:#111;letter-spacing:0.127px;left:367px;-webkit-text-stroke:0.46px #111;">Prio</div>
<div class="t" style="top:623.95px;font-size:13px;line-height:13px;font-weight:400;color:#111;letter-spacing:0.500px;left:433.3px;-webkit-text-stroke:0.46px #111;">Open</div>
<div class="t" style="top:639.95px;font-size:13px;line-height:13px;font-weight:400;color:#111;letter-spacing:0.500px;left:433.3px;-webkit-text-stroke:0.46px #111;">Tasks</div>
<div class="t" style="top:615.95px;font-size:13px;line-height:13px;font-weight:400;color:#111;letter-spacing:0.500px;left:497.5px;-webkit-text-stroke:0.46px #111;">Sales</div>
<div class="t" style="top:631.95px;font-size:13px;line-height:13px;font-weight:400;color:#111;letter-spacing:0.500px;left:497.5px;-webkit-text-stroke:0.46px #111;">Order</div>
<div class="t" style="top:647.95px;font-size:13px;line-height:13px;font-weight:400;color:#111;letter-spacing:0.500px;left:497.5px;-webkit-text-stroke:0.46px #111;">No</div>
<svg class="r" style="left:618px;top:632px;" width="14" height="12" viewBox="0 0 14 12"><line x1="0.5" y1="1.5" x2="5.5" y2="1.5" stroke="#111" stroke-width="1"/><line x1="1.5" y1="4.5" x2="5.5" y2="4.5" stroke="#111" stroke-width="1"/><line x1="2.5" y1="7.5" x2="5.5" y2="7.5" stroke="#111" stroke-width="1"/><line x1="3.5" y1="10" x2="5" y2="10" stroke="#111" stroke-width="1.2"/><line x1="10" y1="1" x2="10" y2="10" stroke="#111" stroke-width="1"/><path d="M7.8 8l2.2 3 2.2-3z" fill="#111"/></svg>
<div class="r" style="left:626.5px;top:624px;width:12px;height:12px;border-radius:50%;background:#050505;color:#fff;font:700 10.5px/12.5px 'Liberation Sans';text-align:center">2</div>
<div class="t" style="top:607.95px;font-size:13px;line-height:13px;font-weight:400;color:#111;letter-spacing:0.500px;left:638.8px;-webkit-text-stroke:0.46px #111;">Net</div>
<div class="t" style="top:623.95px;font-size:13px;line-height:13px;font-weight:400;color:#111;letter-spacing:0.500px;left:638.8px;-webkit-text-stroke:0.46px #111;">Order</div>
<div class="t" style="top:639.95px;font-size:13px;line-height:13px;font-weight:400;color:#111;letter-spacing:0.500px;left:638.8px;-webkit-text-stroke:0.46px #111;">Value</div>
<div class="t" style="top:655.95px;font-size:13px;line-height:13px;font-weight:400;color:#111;letter-spacing:0.500px;left:638.8px;-webkit-text-stroke:0.46px #111;">[EUR]</div>
<div class="t" style="top:623.95px;font-size:13px;line-height:13px;font-weight:400;color:#111;letter-spacing:0.500px;left:699.3px;-webkit-text-stroke:0.46px #111;">Unbilled</div>
<div class="t" style="top:639.95px;font-size:13px;line-height:13px;font-weight:400;color:#111;letter-spacing:0.500px;left:699.3px;-webkit-text-stroke:0.46px #111;">Category</div>
<div class="t" style="top:623.95px;font-size:13px;line-height:13px;font-weight:400;color:#111;letter-spacing:0.500px;left:800px;-webkit-text-stroke:0.46px #111;">Unbilled</div>
<div class="t" style="top:639.95px;font-size:13px;line-height:13px;font-weight:400;color:#111;letter-spacing:0.500px;left:800px;-webkit-text-stroke:0.46px #111;">Status</div>
<svg class="r" style="left:919px;top:632px;" width="14" height="12" viewBox="0 0 14 12"><line x1="0.5" y1="1.5" x2="5.5" y2="1.5" stroke="#111" stroke-width="1"/><line x1="1.5" y1="4.5" x2="5.5" y2="4.5" stroke="#111" stroke-width="1"/><line x1="2.5" y1="7.5" x2="5.5" y2="7.5" stroke="#111" stroke-width="1"/><line x1="3.5" y1="10" x2="5" y2="10" stroke="#111" stroke-width="1.2"/><line x1="10" y1="1" x2="10" y2="10" stroke="#111" stroke-width="1"/><path d="M7.8 8l2.2 3 2.2-3z" fill="#111"/></svg>
<div class="r" style="left:927px;top:624px;width:12px;height:12px;border-radius:50%;background:#050505;color:#fff;font:700 10.5px/12.5px 'Liberation Sans';text-align:center">3</div>
<div class="t" style="top:615.95px;font-size:13px;line-height:13px;font-weight:400;color:#1a1a1a;letter-spacing:0.500px;left:940px;-webkit-text-stroke:0.21px #1a1a1a;">Billing</div>
<div class="t" style="top:631.95px;font-size:13px;line-height:13px;font-weight:400;color:#1a1a1a;letter-spacing:0.500px;left:940px;-webkit-text-stroke:0.21px #1a1a1a;">Delay</div>
<div class="t" style="top:647.95px;font-size:13px;line-height:13px;font-weight:400;color:#1a1a1a;letter-spacing:0.500px;left:940px;-webkit-text-stroke:0.21px #1a1a1a;">[Days]</div>
<div class="t" style="top:615.95px;font-size:13px;line-height:13px;font-weight:400;color:#1a1a1a;letter-spacing:0.500px;left:1023.3px;-webkit-text-stroke:0.21px #1a1a1a;">Goods</div>
<div class="t" style="top:631.95px;font-size:13px;line-height:13px;font-weight:400;color:#1a1a1a;letter-spacing:0.500px;left:1023.3px;-webkit-text-stroke:0.21px #1a1a1a;">Issue</div>
<div class="t" style="top:647.95px;font-size:13px;line-height:13px;font-weight:400;color:#1a1a1a;letter-spacing:0.500px;left:1023.3px;-webkit-text-stroke:0.21px #1a1a1a;">Date</div>
<div class="t" style="top:607.95px;font-size:13px;line-height:13px;font-weight:400;color:#1a1a1a;letter-spacing:0.500px;left:1118.8px;-webkit-text-stroke:0.21px #1a1a1a;">Planned</div>
<div class="t" style="top:623.95px;font-size:13px;line-height:13px;font-weight:400;color:#1a1a1a;letter-spacing:0.500px;left:1118.8px;-webkit-text-stroke:0.21px #1a1a1a;">Goods</div>
<div class="t" style="top:639.95px;font-size:13px;line-height:13px;font-weight:400;color:#1a1a1a;letter-spacing:0.500px;left:1118.8px;-webkit-text-stroke:0.21px #1a1a1a;">Issue</div>
<div class="t" style="top:655.95px;font-size:13px;line-height:13px;font-weight:400;color:#1a1a1a;letter-spacing:0.500px;left:1118.8px;-webkit-text-stroke:0.21px #1a1a1a;">Date</div>
<div class="t" style="top:623.95px;font-size:13px;line-height:13px;font-weight:400;color:#1a1a1a;letter-spacing:0.500px;left:1213.8px;-webkit-text-stroke:0.21px #1a1a1a;">Creation</div>
<div class="t" style="top:639.95px;font-size:13px;line-height:13px;font-weight:400;color:#1a1a1a;letter-spacing:0.500px;left:1213.8px;-webkit-text-stroke:0.21px #1a1a1a;">Date</div>
<div class="t" style="top:623.95px;font-size:13px;line-height:13px;font-weight:400;color:#1a1a1a;letter-spacing:0.500px;left:1283.8px;-webkit-text-stroke:0.21px #1a1a1a;">Billing</div>
<div class="t" style="top:639.95px;font-size:13px;line-height:13px;font-weight:400;color:#1a1a1a;letter-spacing:0.500px;left:1283.8px;-webkit-text-stroke:0.21px #1a1a1a;">Block</div>
<div class="t" style="top:623.95px;font-size:13px;line-height:13px;font-weight:400;color:#1a1a1a;letter-spacing:0.500px;left:1401.3px;-webkit-text-stroke:0.21px #1a1a1a;">Customer</div>
<div class="t" style="top:639.95px;font-size:13px;line-height:13px;font-weight:400;color:#1a1a1a;letter-spacing:0.500px;left:1401.3px;-webkit-text-stroke:0.21px #1a1a1a;">Number</div>
<div class="r" style="left:1455px;top:598px;width:34px;height:80px;background:#fdfdfc;box-shadow:-3px 0 4px rgba(0,0,0,0.06)"></div>
<svg class="r" style="left:1469px;top:631px;" width="6" height="16" viewBox="0 0 6 16"><circle cx="3" cy="2.6" r="1.35" fill="#111"/><circle cx="3" cy="8" r="1.35" fill="#111"/><circle cx="3" cy="13.4" r="1.35" fill="#111"/></svg>
<div class="r" style="left:128px;top:678px;width:1361px;height:1px;background:#111"></div>
<div class="r" style="left:128px;top:958px;width:1114px;height:8px;background:#c9c9cb;border-radius:4px"></div>
<div class="r" style="left:136px;top:687px;width:16px;height:16px;border:1.5px solid #1a1a1a;box-sizing:border-box"></div>
<div class="t" style="top:689.02px;font-size:13.5px;line-height:13.5px;font-weight:400;color:#4f5ce8;letter-spacing:0.358px;left:168.8px;">0000019344000010</div>
<svg class="r" style="left:320px;top:683px;" width="18" height="26" viewBox="0 0 18 26"><path d="M3 10.3l6.0 -6.5 6.0 6.5" fill="none" stroke="#7c0a1c" stroke-width="1.9"/><path d="M3 16.5l6.0 -6.5 6.0 6.5" fill="none" stroke="#c8001e" stroke-width="1.9"/><path d="M3 22.5l6.0 -6.5 6.0 6.5" fill="none" stroke="#ff1f45" stroke-width="1.9"/></svg>
<div class="t" style="top:689.02px;font-size:13.5px;line-height:13.5px;font-weight:400;color:#222;letter-spacing:0.050px;right:1476.45px;">1</div>
<div class="r" style="left:461.8px;top:688px;width:14px;height:14px;border-radius:50%;background:#ff3f97;box-shadow:0 0 0 1.5px #ffb3d6 inset"></div>
<div class="t" style="top:689.02px;font-size:13.5px;line-height:13.5px;font-weight:400;color:#222;letter-spacing:0.324px;left:497.5px;">0000019344</div>
<div class="t" style="top:689.02px;font-size:13.5px;line-height:13.5px;font-weight:400;color:#222;letter-spacing:0.600px;right:1240.60px;">1,000,000.00</div>
<div class="t" style="top:689.02px;font-size:13.5px;line-height:13.5px;font-weight:400;color:#222;letter-spacing:-0.106px;left:699.3px;">Long Runner</div>
<div class="t" style="top:689.02px;font-size:13.5px;line-height:13.5px;font-weight:400;color:#222;letter-spacing:0.500px;right:939.50px;">81</div>
<div class="t" style="top:689.02px;font-size:13.5px;line-height:13.5px;font-weight:400;color:#222;letter-spacing:0.938px;left:998px;">2022-03-02</div>
<div class="t" style="top:689.02px;font-size:13.5px;line-height:13.5px;font-weight:400;color:#222;letter-spacing:0.993px;left:1093px;">2022-03-04</div>
<div class="t" style="top:689.02px;font-size:13.5px;line-height:13.5px;font-weight:400;color:#222;letter-spacing:0.938px;left:1189.3px;">2022-03-02</div>
<div class="t" style="top:689.02px;font-size:13.5px;line-height:13.5px;font-weight:400;color:#222;letter-spacing:0.071px;left:1283.8px;">Not Blocked</div>
<div class="t" style="top:689.02px;font-size:13.5px;line-height:13.5px;font-weight:400;color:#222;letter-spacing:0.324px;left:1401.3px;">0000301665</div>
<div class="r" style="left:128px;top:711px;width:1361px;height:1px;background:#e7e7e9"></div>
<div class="r" style="left:136px;top:720px;width:16px;height:16px;border:1.5px solid #1a1a1a;box-sizing:border-box"></div>
<div class="t" style="top:722.02px;font-size:13.5px;line-height:13.5px;font-weight:400;color:#4f5ce8;letter-spacing:0.358px;left:168.8px;">0000019027000010</div>
<svg class="r" style="left:320px;top:720px;" width="18" height="18" viewBox="0 0 18 18"><path d="M3 9.2l6.0 -6.3 6.0 6.3" fill="none" stroke="#ee8a34" stroke-width="1.9"/><path d="M3 14.899999999999999l6.0 -6.3 6.0 6.3" fill="none" stroke="#f7a236" stroke-width="1.9"/></svg>
<div class="t" style="top:722.02px;font-size:13.5px;line-height:13.5px;font-weight:400;color:#222;letter-spacing:0.050px;right:1476.45px;">3</div>
<div class="r" style="left:461.8px;top:721px;width:14px;height:14px;border-radius:50%;background:#ff3f97;box-shadow:0 0 0 1.5px #ffb3d6 inset"></div>
<div class="t" style="top:722.02px;font-size:13.5px;line-height:13.5px;font-weight:400;color:#222;letter-spacing:0.324px;left:497.5px;">0000019027</div>
<div class="t" style="top:722.02px;font-size:13.5px;line-height:13.5px;font-weight:400;color:#222;letter-spacing:0.600px;right:1240.60px;">11,000.00</div>
<div class="t" style="top:722.02px;font-size:13.5px;line-height:13.5px;font-weight:400;color:#222;letter-spacing:-0.106px;left:699.3px;">Long Runner</div>
<div class="t" style="top:722.02px;font-size:13.5px;line-height:13.5px;font-weight:400;color:#222;letter-spacing:0.500px;right:939.50px;">1,529</div>
<div class="t" style="top:722.02px;font-size:13.5px;line-height:13.5px;font-weight:400;color:#222;letter-spacing:0.938px;left:998px;">2018-03-15</div>
<div class="t" style="top:722.02px;font-size:13.5px;line-height:13.5px;font-weight:400;color:#222;letter-spacing:0.993px;left:1093px;">2018-03-22</div>
<div class="t" style="top:722.02px;font-size:13.5px;line-height:13.5px;font-weight:400;color:#222;letter-spacing:0.938px;left:1189.3px;">2018-03-13</div>
<div class="t" style="top:722.02px;font-size:13.5px;line-height:13.5px;font-weight:400;color:#222;letter-spacing:0.147px;left:1283.8px;">Actively Blocked</div>
<div class="t" style="top:722.02px;font-size:13.5px;line-height:13.5px;font-weight:400;color:#222;letter-spacing:-0.009px;left:1401.3px;">A300015</div>
<div class="r" style="left:128px;top:744px;width:1361px;height:1px;background:#e7e7e9"></div>
<div class="r" style="left:136px;top:753px;width:16px;height:16px;border:1.5px solid #1a1a1a;box-sizing:border-box"></div>
<div class="t" style="top:755.02px;font-size:13.5px;line-height:13.5px;font-weight:400;color:#4f5ce8;letter-spacing:0.358px;left:168.8px;">0000019027000020</div>
<svg class="r" style="left:320px;top:753px;" width="18" height="18" viewBox="0 0 18 18"><path d="M3 9.2l6.0 -6.3 6.0 6.3" fill="none" stroke="#ee8a34" stroke-width="1.9"/><path d="M3 14.899999999999999l6.0 -6.3 6.0 6.3" fill="none" stroke="#f7a236" stroke-width="1.9"/></svg>
<div class="t" style="top:755.02px;font-size:13.5px;line-height:13.5px;font-weight:400;color:#222;letter-spacing:0.050px;right:1476.45px;">2</div>
<div class="r" style="left:461.8px;top:754px;width:14px;height:14px;border-radius:50%;background:#ff3f97;box-shadow:0 0 0 1.5px #ffb3d6 inset"></div>
<div class="t" style="top:755.02px;font-size:13.5px;line-height:13.5px;font-weight:400;color:#222;letter-spacing:0.324px;left:497.5px;">0000019027</div>
<div class="t" style="top:755.02px;font-size:13.5px;line-height:13.5px;font-weight:400;color:#222;letter-spacing:0.600px;right:1240.60px;">11,000.00</div>
<div class="t" style="top:755.02px;font-size:13.5px;line-height:13.5px;font-weight:400;color:#222;letter-spacing:-0.106px;left:699.3px;">Long Runner</div>
<div class="t" style="top:755.02px;font-size:13.5px;line-height:13.5px;font-weight:400;color:#222;letter-spacing:0.500px;right:939.50px;">1,529</div>
<div class="t" style="top:755.02px;font-size:13.5px;line-height:13.5px;font-weight:400;color:#222;letter-spacing:0.938px;left:998px;">2018-03-15</div>
<div class="t" style="top:755.02px;font-size:13.5px;line-height:13.5px;font-weight:400;color:#222;letter-spacing:0.993px;left:1093px;">2018-03-22</div>
<div class="t" style="top:755.02px;font-size:13.5px;line-height:13.5px;font-weight:400;color:#222;letter-spacing:0.938px;left:1189.3px;">2018-03-13</div>
<div class="t" style="top:755.02px;font-size:13.5px;line-height:13.5px;font-weight:400;color:#222;letter-spacing:0.147px;left:1283.8px;">Actively Blocked</div>
<div class="t" style="top:755.02px;font-size:13.5px;line-height:13.5px;font-weight:400;color:#222;letter-spacing:-0.009px;left:1401.3px;">A300015</div>
<div class="r" style="left:128px;top:777px;width:1361px;height:1px;background:#e7e7e9"></div>
<div class="r" style="left:136px;top:786px;width:16px;height:16px;border:1.5px solid #1a1a1a;box-sizing:border-box"></div>
<div class="t" style="top:788.02px;font-size:13.5px;line-height:13.5px;font-weight:400;color:#4f5ce8;letter-spacing:0.358px;left:168.8px;">0000019067000010</div>
<svg class="r" style="left:320px;top:786px;" width="18" height="18" viewBox="0 0 18 18"><path d="M3 9.2l6.0 -6.3 6.0 6.3" fill="none" stroke="#ee8a34" stroke-width="1.9"/><path d="M3 14.899999999999999l6.0 -6.3 6.0 6.3" fill="none" stroke="#f7a236" stroke-width="1.9"/></svg>
<div class="t" style="top:788.02px;font-size:13.5px;line-height:13.5px;font-weight:400;color:#222;letter-spacing:0.050px;right:1476.45px;">2</div>
<div class="r" style="left:461.8px;top:787px;width:14px;height:14px;border-radius:50%;background:#ff3f97;box-shadow:0 0 0 1.5px #ffb3d6 inset"></div>
<div class="t" style="top:788.02px;font-size:13.5px;line-height:13.5px;font-weight:400;color:#222;letter-spacing:0.324px;left:497.5px;">0000019067</div>
<div class="t" style="top:788.02px;font-size:13.5px;line-height:13.5px;font-weight:400;color:#222;letter-spacing:0.600px;right:1240.60px;">11,000.00</div>
<div class="t" style="top:788.02px;font-size:13.5px;line-height:13.5px;font-weight:400;color:#222;letter-spacing:-0.106px;left:699.3px;">Long Runner</div>
<div class="t" style="top:788.02px;font-size:13.5px;line-height:13.5px;font-weight:400;color:#222;letter-spacing:0.500px;right:939.50px;">1,510</div>
<div class="t" style="top:788.02px;font-size:13.5px;line-height:13.5px;font-weight:400;color:#222;letter-spacing:0.938px;left:998px;">2018-04-03</div>
<div class="t" style="top:788.02px;font-size:13.5px;line-height:13.5px;font-weight:400;color:#222;letter-spacing:0.993px;left:1093px;">2018-04-12</div>
<div class="t" style="top:788.02px;font-size:13.5px;line-height:13.5px;font-weight:400;color:#222;letter-spacing:0.938px;left:1189.3px;">2018-04-03</div>
<div class="t" style="top:788.02px;font-size:13.5px;line-height:13.5px;font-weight:400;color:#222;letter-spacing:0.071px;left:1283.8px;">Not Blocked</div>
<div class="t" style="top:788.02px;font-size:13.5px;line-height:13.5px;font-weight:400;color:#222;letter-spacing:-0.009px;left:1401.3px;">A300015</div>
<div class="r" style="left:128px;top:810px;width:1361px;height:1px;background:#e7e7e9"></div>
<div class="r" style="left:136px;top:819px;width:16px;height:16px;border:1.5px solid #1a1a1a;box-sizing:border-box"></div>
<div class="t" style="top:821.02px;font-size:13.5px;line-height:13.5px;font-weight:400;color:#4f5ce8;letter-spacing:0.358px;left:168.8px;">0000018886000010</div>
<svg class="r" style="left:320px;top:821px;" width="18" height="12" viewBox="0 0 18 12"><path d="M3 9.7l6.0 -7 6.0 7" fill="none" stroke="#a2c994" stroke-width="1.3"/></svg>
<div class="t" style="top:821.02px;font-size:13.5px;line-height:13.5px;font-weight:400;color:#222;letter-spacing:0.050px;right:1476.45px;">1</div>
<div class="r" style="left:461.8px;top:820px;width:14px;height:14px;border-radius:50%;background:#ff3f97;box-shadow:0 0 0 1.5px #ffb3d6 inset"></div>
<div class="t" style="top:821.02px;font-size:13.5px;line-height:13.5px;font-weight:400;color:#222;letter-spacing:0.324px;left:497.5px;">0000018886</div>
<div class="t" style="top:821.02px;font-size:13.5px;line-height:13.5px;font-weight:400;color:#222;letter-spacing:0.600px;right:1240.60px;">7,920.00</div>
<div class="t" style="top:821.02px;font-size:13.5px;line-height:13.5px;font-weight:400;color:#222;letter-spacing:-0.106px;left:699.3px;">Long Runner</div>
<div class="t" style="top:821.02px;font-size:13.5px;line-height:13.5px;font-weight:400;color:#222;letter-spacing:0.500px;right:939.50px;">1,727</div>
<div class="t" style="top:821.02px;font-size:13.5px;line-height:13.5px;font-weight:400;color:#222;letter-spacing:0.938px;left:998px;">2017-08-29</div>
<div class="t" style="top:821.02px;font-size:13.5px;line-height:13.5px;font-weight:400;color:#222;letter-spacing:0.993px;left:1093px;">2017-08-30</div>
<div class="t" style="top:821.02px;font-size:13.5px;line-height:13.5px;font-weight:400;color:#222;letter-spacing:0.938px;left:1189.3px;">2017-08-29</div>
<div class="t" style="top:821.02px;font-size:13.5px;line-height:13.5px;font-weight:400;color:#222;letter-spacing:0.071px;left:1283.8px;">Not Blocked</div>
<div class="t" style="top:821.02px;font-size:13.5px;line-height:13.5px;font-weight:400;color:#222;letter-spacing:0.324px;left:1401.3px;">0000865463</div>
<div class="r" style="left:128px;top:843px;width:1361px;height:1px;background:#e7e7e9"></div>
<div class="r" style="left:136px;top:852px;width:16px;height:16px;border:1.5px solid #1a1a1a;box-sizing:border-box"></div>
<div class="t" style="top:854.02px;font-size:13.5px;line-height:13.5px;font-weight:400;color:#4f5ce8;letter-spacing:0.358px;left:168.8px;">0000019088000010</div>
<svg class="r" style="left:320px;top:854px;" width="18" height="12" viewBox="0 0 18 12"><path d="M3 9.7l6.0 -7 6.0 7" fill="none" stroke="#a2c994" stroke-width="1.3"/></svg>
<div class="t" style="top:854.02px;font-size:13.5px;line-height:13.5px;font-weight:400;color:#222;letter-spacing:0.050px;right:1476.45px;">1</div>
<div class="r" style="left:461.8px;top:853px;width:14px;height:14px;border-radius:50%;background:#ff3f97;box-shadow:0 0 0 1.5px #ffb3d6 inset"></div>
<div class="t" style="top:854.02px;font-size:13.5px;line-height:13.5px;font-weight:400;color:#222;letter-spacing:0.324px;left:497.5px;">0000019088</div>
<div class="t" style="top:854.02px;font-size:13.5px;line-height:13.5px;font-weight:400;color:#222;letter-spacing:0.600px;right:1240.60px;">2,000.00</div>
<div class="t" style="top:854.02px;font-size:13.5px;line-height:13.5px;font-weight:400;color:#222;letter-spacing:-0.106px;left:699.3px;">Long Runner</div>
<div class="t" style="top:854.02px;font-size:13.5px;line-height:13.5px;font-weight:400;color:#222;letter-spacing:0.500px;right:939.50px;">320</div>
<div class="t" style="top:854.02px;font-size:13.5px;line-height:13.5px;font-weight:400;color:#222;letter-spacing:0.938px;left:998px;">2021-07-06</div>
<div class="t" style="top:854.02px;font-size:13.5px;line-height:13.5px;font-weight:400;color:#222;letter-spacing:1.105px;left:1093px;">2021-05-11</div>
<div class="t" style="top:854.02px;font-size:13.5px;line-height:13.5px;font-weight:400;color:#222;letter-spacing:0.938px;left:1189.3px;">2021-05-07</div>
<div class="t" style="top:854.02px;font-size:13.5px;line-height:13.5px;font-weight:400;color:#222;letter-spacing:0.071px;left:1283.8px;">Not Blocked</div>
<div class="t" style="top:854.02px;font-size:13.5px;line-height:13.5px;font-weight:400;color:#222;letter-spacing:0.324px;left:1401.3px;">0000001000</div>
<div class="r" style="left:128px;top:876px;width:1361px;height:1px;background:#e7e7e9"></div>
<div class="r" style="left:136px;top:885px;width:16px;height:16px;border:1.5px solid #1a1a1a;box-sizing:border-box"></div>
<div class="t" style="top:887.02px;font-size:13.5px;line-height:13.5px;font-weight:400;color:#4f5ce8;letter-spacing:0.358px;left:168.8px;">0000019345000010</div>
<svg class="r" style="left:320px;top:887px;" width="18" height="12" viewBox="0 0 18 12"><path d="M3 9.7l6.0 -7 6.0 7" fill="none" stroke="#a2c994" stroke-width="1.3"/></svg>
<div class="t" style="top:887.02px;font-size:13.5px;line-height:13.5px;font-weight:400;color:#222;letter-spacing:0.050px;right:1476.45px;">1</div>
<div class="r" style="left:461.8px;top:886px;width:14px;height:14px;border-radius:50%;background:#ff3f97;box-shadow:0 0 0 1.5px #ffb3d6 inset"></div>
<div class="t" style="top:887.02px;font-size:13.5px;line-height:13.5px;font-weight:400;color:#222;letter-spacing:0.324px;left:497.5px;">0000019345</div>
<div class="t" style="top:887.02px;font-size:13.5px;line-height:13.5px;font-weight:400;color:#222;letter-spacing:0.600px;right:1240.60px;">1,000.00</div>
<div class="t" style="top:887.02px;font-size:13.5px;line-height:13.5px;font-weight:400;color:#222;letter-spacing:-0.106px;left:699.3px;">Long Runner</div>
<div class="t" style="top:887.02px;font-size:13.5px;line-height:13.5px;font-weight:400;color:#222;letter-spacing:0.500px;right:939.50px;">81</div>
<div class="t" style="top:887.02px;font-size:13.5px;line-height:13.5px;font-weight:400;color:#222;letter-spacing:0.938px;left:998px;">2022-03-02</div>
<div class="t" style="top:887.02px;font-size:13.5px;line-height:13.5px;font-weight:400;color:#222;letter-spacing:0.993px;left:1093px;">2022-03-04</div>
<div class="t" style="top:887.02px;font-size:13.5px;line-height:13.5px;font-weight:400;color:#222;letter-spacing:0.938px;left:1189.3px;">2022-03-02</div>
<div class="t" style="top:887.02px;font-size:13.5px;line-height:13.5px;font-weight:400;color:#222;letter-spacing:0.071px;left:1283.8px;">Not Blocked</div>
<div class="t" style="top:887.02px;font-size:13.5px;line-height:13.5px;font-weight:400;color:#222;letter-spacing:0.324px;left:1401.3px;">0000301665</div>
<div class="r" style="left:128px;top:909px;width:1361px;height:1px;background:#e7e7e9"></div>
<div class="r" style="left:136px;top:918px;width:16px;height:16px;border:1.5px solid #1a1a1a;box-sizing:border-box"></div>
<div class="t" style="top:920.02px;font-size:13.5px;line-height:13.5px;font-weight:400;color:#4f5ce8;letter-spacing:0.358px;left:168.8px;">0000019346000010</div>
<svg class="r" style="left:320px;top:920px;" width="18" height="12" viewBox="0 0 18 12"><path d="M3 9.7l6.0 -7 6.0 7" fill="none" stroke="#a2c994" stroke-width="1.3"/></svg>
<div class="t" style="top:920.02px;font-size:13.5px;line-height:13.5px;font-weight:400;color:#222;letter-spacing:0.050px;right:1476.45px;">1</div>
<div class="r" style="left:461.8px;top:919px;width:14px;height:14px;border-radius:50%;background:#ff3f97;box-shadow:0 0 0 1.5px #ffb3d6 inset"></div>
<div class="t" style="top:920.02px;font-size:13.5px;line-height:13.5px;font-weight:400;color:#222;letter-spacing:0.324px;left:497.5px;">0000019346</div>
<div class="t" style="top:920.02px;font-size:13.5px;line-height:13.5px;font-weight:400;color:#222;letter-spacing:0.600px;right:1240.60px;">1,000.00</div>
<div class="t" style="top:920.02px;font-size:13.5px;line-height:13.5px;font-weight:400;color:#222;letter-spacing:-0.106px;left:699.3px;">Long Runner</div>
<div class="t" style="top:920.02px;font-size:13.5px;line-height:13.5px;font-weight:400;color:#222;letter-spacing:0.500px;right:939.50px;">80</div>
<div class="t" style="top:920.02px;font-size:13.5px;line-height:13.5px;font-weight:400;color:#222;letter-spacing:0.938px;left:998px;">2022-03-03</div>
<div class="t" style="top:920.02px;font-size:13.5px;line-height:13.5px;font-weight:400;color:#222;letter-spacing:0.993px;left:1093px;">2022-03-07</div>
<div class="t" style="top:920.02px;font-size:13.5px;line-height:13.5px;font-weight:400;color:#222;letter-spacing:0.938px;left:1189.3px;">2022-03-03</div>
<div class="t" style="top:920.02px;font-size:13.5px;line-height:13.5px;font-weight:400;color:#222;letter-spacing:0.071px;left:1283.8px;">Not Blocked</div>
<div class="t" style="top:920.02px;font-size:13.5px;line-height:13.5px;font-weight:400;color:#222;letter-spacing:0.324px;left:1401.3px;">0000301665</div>
<div class="r" style="left:128px;top:942px;width:1361px;height:1px;background:#e7e7e9"></div>
<div class="r" style="left:136px;top:951px;width:16px;height:16px;border:1.5px solid #1a1a1a;box-sizing:border-box"></div>
<div class="t" style="top:953.02px;font-size:13.5px;line-height:13.5px;font-weight:400;color:#4f5ce8;letter-spacing:0.358px;left:168.8px;">0000018767000010</div>
<div class="t" style="top:953.02px;font-size:13.5px;line-height:13.5px;font-weight:400;color:#222;letter-spacing:0.050px;right:1476.45px;">1</div>
<div class="r" style="left:461.8px;top:952px;width:14px;height:14px;border-radius:50%;background:#ff3f97;box-shadow:0 0 0 1.5px #ffb3d6 inset"></div>
<div class="t" style="top:953.02px;font-size:13.5px;line-height:13.5px;font-weight:400;color:#222;letter-spacing:0.324px;left:497.5px;">0000018767</div>
<div class="t" style="top:953.02px;font-size:13.5px;line-height:13.5px;font-weight:400;color:#222;letter-spacing:0.600px;right:1240.60px;">625.00</div>
<div class="t" style="top:953.02px;font-size:13.5px;line-height:13.5px;font-weight:400;color:#222;letter-spacing:-0.106px;left:699.3px;">Long Runner</div>
<div class="t" style="top:953.02px;font-size:13.5px;line-height:13.5px;font-weight:400;color:#222;letter-spacing:0.500px;right:939.50px;">1,803</div>
<div class="t" style="top:953.02px;font-size:13.5px;line-height:13.5px;font-weight:400;color:#222;letter-spacing:0.938px;left:998px;">2017-06-14</div>
<div class="t" style="top:953.02px;font-size:13.5px;line-height:13.5px;font-weight:400;color:#222;letter-spacing:0.993px;left:1093px;">2017-06-26</div>
<div class="t" style="top:953.02px;font-size:13.5px;line-height:13.5px;font-weight:400;color:#222;letter-spacing:0.938px;left:1189.3px;">2017-06-14</div>
<div class="t" style="top:953.02px;font-size:13.5px;line-height:13.5px;font-weight:400;color:#222;letter-spacing:0.071px;left:1283.8px;">Not Blocked</div>
<div class="t" style="top:953.02px;font-size:13.5px;line-height:13.5px;font-weight:400;color:#222;letter-spacing:0.324px;left:1401.3px;">0000010003</div>
<div class="r" style="left:128px;top:967px;width:1361px;height:1px;background:#c9c9cc"></div>
<div class="r" style="left:1481px;top:680px;width:7px;height:184px;background:#c8c8ca;border-radius:4px"></div>
<div class="r" style="left:685px;top:976px;width:49px;height:24px;border:1px solid #c6c6c9;box-sizing:border-box"></div>
<div class="t" style="top:982.30px;font-size:12px;line-height:12px;font-weight:700;color:#b3b3b7;letter-spacing:0.400px;left:409.70px;width:600px;text-align:center;">First</div>
<div class="r" style="left:742px;top:976px;width:40px;height:24px;border:1px solid #c6c6c9;box-sizing:border-box"></div>
<svg class="r" style="left:758.0px;top:982px;" width="8" height="12" viewBox="0 0 8 12"><path d="M6 1.5L1.5 6 6 10.5" fill="none" stroke="#777" stroke-width="1.3"/></svg>
<div class="r" style="left:790px;top:976px;width:40px;height:24px;background:#2b48fb"></div>
<div class="t" style="top:982.30px;font-size:12px;line-height:12px;font-weight:700;color:#fff;letter-spacing:0.000px;left:510.00px;width:600px;text-align:center;">1</div>
<div class="r" style="left:838px;top:976px;width:40px;height:24px;border:1px solid #c6c6c9;box-sizing:border-box"></div>
<svg class="r" style="left:854.0px;top:982px;" width="8" height="12" viewBox="0 0 8 12"><path d="M1.5 1.5L6 6 1.5 10.5" fill="none" stroke="#777" stroke-width="1.3"/></svg>
<div class="r" style="left:886px;top:976px;width:47px;height:24px;border:1px solid #c6c6c9;box-sizing:border-box"></div>
<div class="t" style="top:982.30px;font-size:12px;line-height:12px;font-weight:700;color:#b3b3b7;letter-spacing:0.400px;left:609.70px;width:600px;text-align:center;">Last</div>
</body></html>
